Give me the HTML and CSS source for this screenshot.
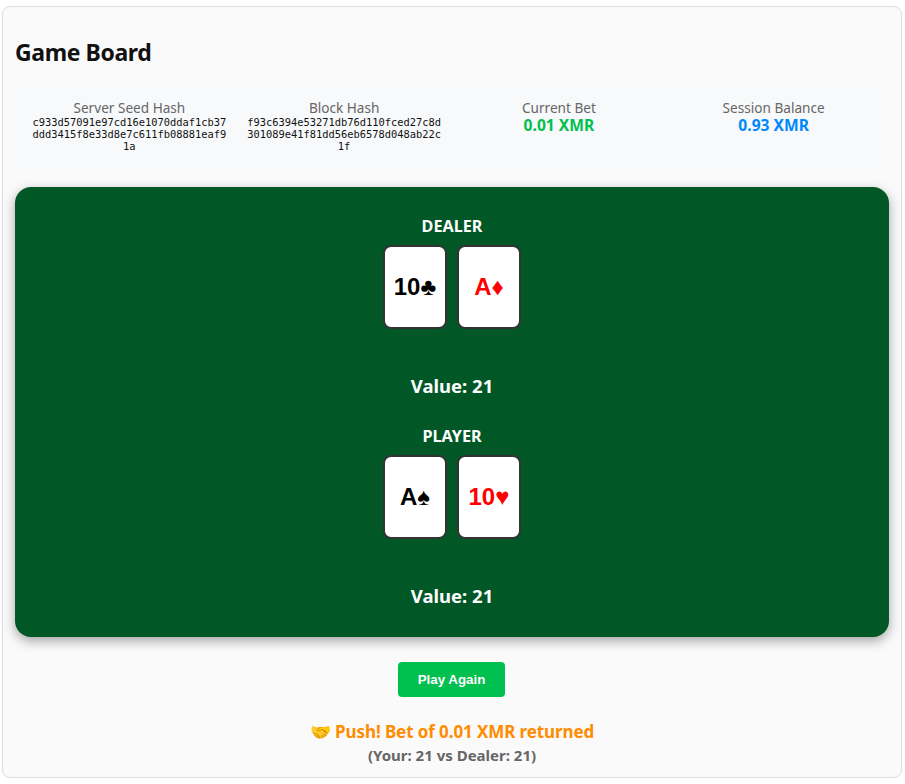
FILE: index.html
```html
<!DOCTYPE html>
<html lang="en">
<head>
  <meta charset="UTF-8">
  <meta name="viewport" content="width=device-width, initial-scale=1.0">
  <title>Game Board</title>
  <link rel="stylesheet" href="styles.css">
</head>
<body>
  <div class="game-container">
    <h2>Game Board</h2>

    <div class="game-info">
      <div class="info-item">
        <div class="info-label">Server Seed Hash</div>
        <div class="info-hash">c933d57091e97cd16e1070ddaf1cb37ddd3415f8e33d8e7c611fb08881eaf91a</div>
      </div>
      <div class="info-item">
        <div class="info-label">Block Hash</div>
        <div class="info-hash">f93c6394e53271db76d110fced27c8d301089e41f81dd56eb6578d048ab22c1f</div>
      </div>
      <div class="info-item">
        <div class="info-label">Current Bet</div>
        <div class="info-value bet">0.01 XMR</div>
      </div>
      <div class="info-item">
        <div class="info-label">Session Balance</div>
        <div class="info-value balance">0.93 XMR</div>
      </div>
    </div>

    <div class="board">
      <div class="hand">
        <h3>DEALER</h3>
        <div class="cards">
          <div class="card">10♣</div>
          <div class="card red">A♦</div>
        </div>
        <div class="hand-value">Value: 21</div>
      </div>
      <div class="hand">
        <h3>PLAYER</h3>
        <div class="cards">
          <div class="card">A♠</div>
          <div class="card red">10♥</div>
        </div>
        <div class="hand-value">Value: 21</div>
      </div>
    </div>

    <div class="controls">
      <button class="play-button">Play Again</button>
    </div>

    <div class="result">
      <div class="result-main">🤝 Push! Bet of 0.01 XMR returned</div>
      <div class="result-sub">(Your: 21 vs Dealer: 21)</div>
    </div>
  </div>
</body>
</html>
```

FILE: styles.css
```css
body {
  font-family: "Noto Sans", "Open Sans", sans-serif;
  background-color: #fff;
  margin: 6px 3px 6px 2px;
}

.game-container {
  background: #fafafa;
  border: 1px solid #ddd;
  border-radius: 8px;
  padding: 12px 12px 8px;
  height: 772px;
  box-sizing: border-box;
}

h2 {
  margin: 19px 0 18px;
  font-size: 23px;
  line-height: 28px;
  letter-spacing: -0.4px;
  color: #111;
}

.game-info {
  display: flex;
  background: #f8f9fa;
  border-radius: 8px;
  padding: 16px 8px 16px 7px;
  height: 88px;
  box-sizing: border-box;
  margin-bottom: 15px;
  text-align: center;
}

.info-item {
  flex: 1;
  padding: 0 8px;
  min-width: 0;
}

.info-label {
  font-size: 13.6px;
  line-height: 16px;
  color: #666;
}

.info-hash {
  font-family: "DejaVu Sans Mono", monospace;
  font-size: 10.4px;
  line-height: 12px;
  color: #111;
  word-break: break-all;
}

.info-value {
  font-size: 15.6px;
  line-height: 19px;
  font-weight: bold;
}

.bet {
  color: #00c04f;
}

.balance {
  color: #0088ff;
}

.board {
  background: #015826;
  border-radius: 16px;
  box-shadow: 0 4px 12px rgba(0, 0, 0, 0.35);
  height: 450px;
  padding: 30px 20px 20px;
  box-sizing: border-box;
  color: #fff;
  text-align: center;
}

.hand {
  height: 210px;
}

h3 {
  margin: 0 0 9px;
  font-size: 16.2px;
  line-height: 19px;
}

.cards {
  display: flex;
  justify-content: center;
  gap: 10px;
  height: 130px;
}

.card {
  width: 60px;
  height: 80px;
  background: #fff;
  border: 2px solid #333;
  border-radius: 8px;
  display: flex;
  align-items: center;
  justify-content: center;
  font-family: "Liberation Sans", Arial, sans-serif;
  font-size: 24px;
  font-weight: bold;
  color: #000;
}

.card.red {
  color: #f00;
}

.hand-value {
  font-size: 18.5px;
  line-height: 21px;
  font-weight: bold;
}

.controls {
  display: flex;
  justify-content: center;
  margin-top: 25px;
}

.play-button {
  width: 107px;
  height: 35px;
  margin-right: 1px;
  background: #00c04f;
  color: #fff;
  border: none;
  border-radius: 4px;
  font-family: "Liberation Sans", Arial, sans-serif;
  font-size: 13.33px;
  font-weight: bold;
  cursor: pointer;
}

.result {
  margin-top: 24px;
  text-align: center;
}

.result-main {
  font-size: 17px;
  line-height: 21px;
  letter-spacing: -0.1px;
  font-weight: bold;
  color: #ff8c00;
}

.result-sub {
  margin-top: 4px;
  font-size: 15px;
  line-height: 19px;
  font-weight: bold;
  color: #666;
}
```
